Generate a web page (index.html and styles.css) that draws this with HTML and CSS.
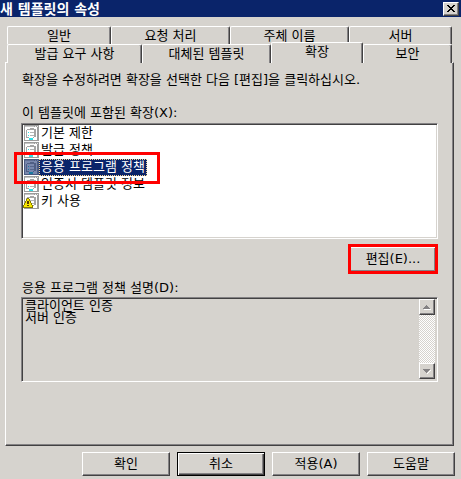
FILE: index.html
```
<!DOCTYPE html>
<html lang="ko">
<head>
  <meta charset="utf-8">
  <title>새 템플릿의 속성</title>
  <link rel="stylesheet" href="styles.css">
</head>
<body>
  <!-- Shared icons -->
  <svg width="0" height="0" class="icon-defs" aria-hidden="true">
    <defs>
      <g id="icon-cert" shape-rendering="crispEdges">
        <path d="M1 0h15v16H1z" fill="#9c9c9c"/>
        <path d="M2 2h12v13H2z" fill="#fff"/>
        <path d="M2 1h9v1H2z" fill="#c6c6c6"/>
        <path d="M12 1h1v1h-1zM14 1h1v1h-1z" fill="#e8e8e8"/>
        <path d="M4 4h2v1H4zM7 3h4v1H7zM6 4h1v1H6zM11 4h2v8h-2v1h-1v-1h1V5H4v7h2v1H3V5h1V4z" fill="#a5a5a5"/>
        <path d="M7 7h4v1H7zM7 10h4v1H7z" fill="#b5b5b5"/>
        <path d="M5 7h1v1H5zM5 10h1v1H5zM6 13h4v2H6z" fill="#31dfe7"/>
      </g>
      <g id="icon-warning" shape-rendering="crispEdges">
        <path d="M4 5h2v1h1v2h1v2h1v2h1v3H0v-3h1v-2h1V8h1V6h1z" fill="#847b00"/>
        <path d="M4 6h2v2h1v2h1v2h1v2H1v-2h1v-2h1V8h1z" fill="#f7e700"/>
        <path d="M4 8h2v3H4zM4 12h2v1H4z" fill="#5a3900"/>
      </g>
    </defs>
  </svg>

  <div class="dialog">
    <div class="title-bar">
      <span class="title">새 템플릿의 속성</span>
      <button class="close-button" aria-label="닫기">
        <svg width="8" height="7" viewBox="0 0 8 7" shape-rendering="crispEdges">
          <path d="M0 0h2v1h1v1h2V1h1V0h2v1H7v1H6v1H5v1h1v1h1v1h1v1H6V6H5V5H3v1H2v1H0V6h1V5h1V4h1V3H2V2H1V1H0z"/>
        </svg>
      </button>
    </div>

    <!-- Tabs -->
    <div class="tabs" role="tablist">
      <div class="tab-row tab-row-back">
        <button class="tab" role="tab">일반</button>
        <button class="tab" role="tab">요청 처리</button>
        <button class="tab" role="tab">주체 이름</button>
        <button class="tab" role="tab">서버</button>
      </div>
      <div class="tab-row tab-row-front">
        <button class="tab" role="tab">발급 요구 사항</button>
        <button class="tab" role="tab">대체된 템플릿</button>
        <button class="tab active" role="tab" aria-selected="true">확장</button>
        <button class="tab" role="tab">보안</button>
      </div>
    </div>

    <div class="panel" role="tabpanel">
      <p class="hint">확장을 수정하려면 확장을 선택한 다음 [편집]을 클릭하십시오.</p>

      <div class="label" id="extensions-label">이 템플릿에 포함된 확장(X):</div>
      <ul class="extension-list" role="listbox" aria-labelledby="extensions-label">
        <li role="option">
          <svg class="icon" viewBox="0 0 16 16"><use href="#icon-cert"/></svg>
          <span class="name">기본 제한</span>
        </li>
        <li role="option">
          <svg class="icon" viewBox="0 0 16 16"><use href="#icon-cert"/></svg>
          <span class="name">발급 정책</span>
        </li>
        <li role="option" class="selected" aria-selected="true">
          <svg class="icon" viewBox="0 0 16 16">
            <use href="#icon-cert"/>
            <rect x="1" y="0" width="15" height="16" fill="#0a246a" fill-opacity="0.55"/>
          </svg>
          <span class="name">응용 프로그램 정책</span>
        </li>
        <li role="option">
          <svg class="icon" viewBox="0 0 16 16"><use href="#icon-cert"/></svg>
          <span class="name">인증서 템플릿 정보</span>
        </li>
        <li role="option">
          <svg class="icon" viewBox="0 0 16 16"><use href="#icon-cert"/><use href="#icon-warning"/></svg>
          <span class="name">키 사용</span>
        </li>
      </ul>

      <div class="edit-row">
        <button class="button edit-button">편집(E)...</button>
      </div>

      <label class="label" for="description">응용 프로그램 정책 설명(D):</label>
      <div class="description">
        <textarea id="description" readonly>클라이언트 인증
서버 인증</textarea>
        <div class="scrollbar">
          <button class="scroll-button" aria-label="위로">
            <svg width="8" height="5" viewBox="0 0 8 5" shape-rendering="crispEdges">
              <path d="M1 4h7v1H1z" fill="#fff"/>
              <path d="M3 0h1v1h1v1h1v1h1v1H0V3h1V2h1V1h1z" fill="#848284"/>
            </svg>
          </button>
          <button class="scroll-button" aria-label="아래로">
            <svg width="8" height="5" viewBox="0 0 8 5" shape-rendering="crispEdges">
              <path d="M8 1v1H7v1H6v1H5v1H4V4h1V3h1V2h1V1z" fill="#fff"/>
              <path d="M0 0h7v1H6v1H5v1H4v1H3V3H2V2H1V1H0z" fill="#848284"/>
            </svg>
          </button>
        </div>
      </div>
    </div>

    <div class="actions">
      <button class="button">확인</button>
      <button class="button default">취소</button>
      <button class="button">적용(A)</button>
      <button class="button">도움말</button>
    </div>
  </div>
</body>
</html>
```
FILE: styles.css
```
* {
  box-sizing: border-box;
}

body {
  margin: 0;
  background: #d6d3ce;
  color: #000;
  font: 13px/16px "DejaVu Sans", "Noto Sans CJK KR", sans-serif;
}

button,
textarea {
  font: inherit;
  color: inherit;
}

.icon-defs {
  position: absolute;
}

/* Title bar */
.title-bar {
  display: flex;
  align-items: center;
  justify-content: space-between;
  height: 17px;
  padding-right: 2px;
  background: #0a246a;
  color: #fff;
}

.title {
  font-size: 14px;
  font-weight: bold;
}

.close-button,
.scroll-button {
  display: flex;
  align-items: center;
  justify-content: center;
  width: 16px;
  padding: 0;
  color: #000;
  background: #d6d3ce;
  border: 1px solid;
  border-color: #fff #424142 #424142 #fff;
  box-shadow: inset -1px -1px #848284;
}

.close-button {
  height: 14px;
}

/* Tabs */
.tabs {
  padding: 9px 9px 0 7px;
}

.tab-row {
  display: grid;
  height: 18px;
}

.tab-row-back {
  grid-template-columns: 104fr 119fr 119fr 103fr;
}

.tab-row-front {
  grid-template-columns: 135fr 129fr 92fr 89fr;
}

.tab {
  padding: 0;
  background: #d6d3ce;
  border: solid;
  border-width: 1px 1px 0;
  border-color: #fff #424142 #fff #fff;
  border-radius: 2px 2px 0 0;
  box-shadow: inset -1px 0 #848284;
  line-height: 16px;
}

.tab.active {
  position: relative;
  height: 21px;
  margin-top: -2px;
  padding-bottom: 3px;
}

/* Panel */
.panel {
  margin: 0 7px 0 5px;
  padding: 9px 14px 63px 15px;
  border: 1px solid;
  border-color: #fff #424142 #424142 #fff;
  box-shadow: inset -1px -1px #848284;
}

.hint {
  margin: 0 0 17px 1px;
}

.label {
  display: block;
  padding-left: 1px;
}

.extension-list {
  height: 116px;
  margin: 2px 1px 5px 0;
  padding: 1px;
  list-style: none;
  background: #fff;
  border: 1px solid;
  border-color: #848284 #fff #fff #848284;
  box-shadow: inset 1px 1px #424142, inset -1px -1px #d6d3ce;
}

.extension-list li {
  display: flex;
  height: 17px;
}

.icon {
  width: 16px;
  height: 16px;
}

.name {
  padding: 0 2px;
  line-height: 16px;
}

.selected .name {
  position: relative;
  background: #0a246a;
  color: #fff;
  outline: 1px dotted #f7d794;
  outline-offset: -1px;
}

/* Red highlight around the chosen extension */
.selected .name::after {
  content: "";
  position: absolute;
  inset: -7px -13px -8px -25px;
  border: 3px solid #f00;
}

.edit-row {
  display: flex;
  justify-content: flex-end;
  margin: 0 1px 6px 0;
}

.button {
  width: 88px;
  height: 24px;
  padding: 0;
  background: #d6d3ce;
  border: 1px solid;
  border-color: #fff #424142 #424142 #fff;
  box-shadow: inset -1px -1px #848284;
}

.edit-button {
  width: 90px;
  height: 30px;
  border: 3px solid #f00;
  box-shadow: inset 0 1px #fff, inset -1px -1px #848284;
}

/* Description */
.description {
  display: flex;
  height: 85px;
  margin: 1px 1px 0 0;
  padding: 1px;
  border: 1px solid;
  border-color: #848284 #fff #fff #848284;
  box-shadow: inset 1px 1px #424142;
}

.description textarea {
  flex: 1;
  padding: 1px 2px 0;
  background: transparent;
  border: none;
  outline: none;
  resize: none;
  overflow: hidden;
  line-height: 12px;
}

.scrollbar {
  display: flex;
  flex-direction: column;
  justify-content: space-between;
  margin: 0 1px 1px 0;
  background: repeating-conic-gradient(#fff 0 25%, #d6d3ce 0 50%) 0 0 / 2px 2px;
}

.scroll-button {
  height: 16px;
}

/* Bottom buttons */
.actions {
  display: flex;
  justify-content: flex-end;
  gap: 7px;
  padding: 6px 6px 3px;
}

.button.default {
  border-color: #000;
  box-shadow: inset 1px 1px #fff, inset -1px -1px #424142, inset -2px -2px #848284;
}
```
